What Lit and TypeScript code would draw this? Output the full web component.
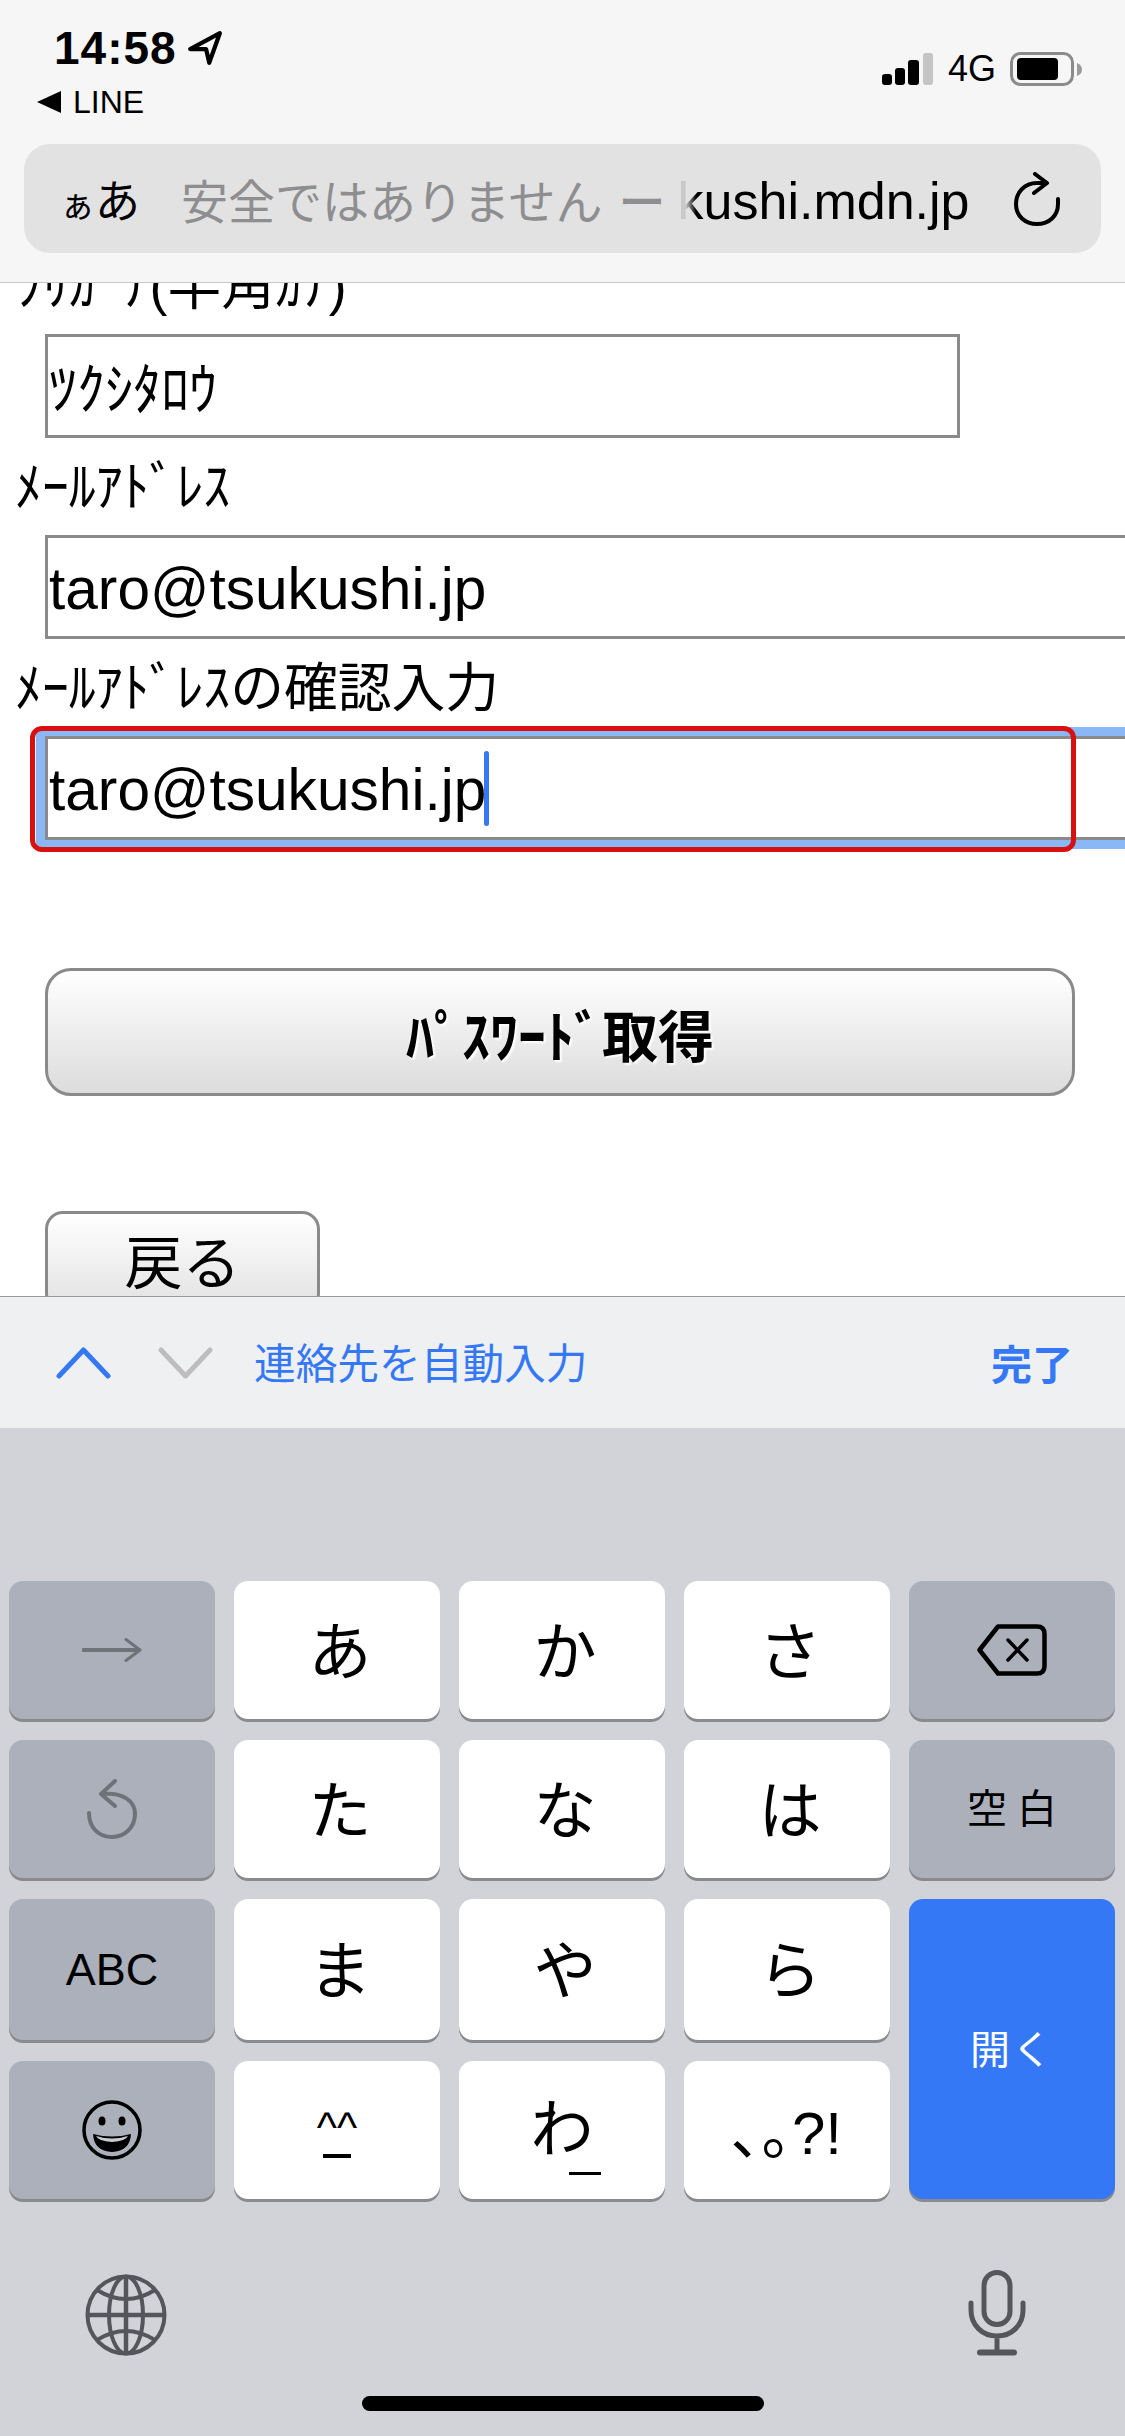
import { LitElement, css, html } from 'lit';
import { customElement } from 'lit/decorators.js';

const arrowIcon = html`<svg width="60" height="24" viewBox="0 0 60 24" fill="none" stroke="#6f7278" stroke-linecap="round" stroke-linejoin="round">
  <path d="M1.5 12H57" stroke-width="4"/><path d="M44 1.5 58 12 44 22.5" stroke-width="3"/></svg>`;

const undoIcon = html`<svg width="50" height="60" viewBox="0 0 50 60" fill="none" stroke="#6f7278" stroke-width="4" stroke-linecap="round" stroke-linejoin="round">
  <path d="M28 2 14 15 28 27"/><path d="M15 15C36 13 48 22 48 35 48 49 37 58 25 58 12 58 2 49 2 34"/></svg>`;

const backspaceIcon = html`<svg width="70" height="52" viewBox="0 0 70 52" fill="none" stroke="#000" stroke-linejoin="round" stroke-linecap="round">
  <path d="M21 2.500H60Q67.500 2.500 67.500 10V42Q67.500 49.500 60 49.500H21L2.500 26Z" stroke-width="4.500"/>
  <path d="M31 16 50 36M50 16 31 36" stroke-width="3.500"/></svg>`;

const smileIcon = html`<svg width="60" height="62" viewBox="0 0 60 62" fill="none">
  <circle cx="30" cy="31" r="28" stroke="#000" stroke-width="3.500"/>
  <ellipse cx="20" cy="22" rx="3.500" ry="4.500" fill="#000"/><ellipse cx="40" cy="22" rx="3.500" ry="4.500" fill="#000"/>
  <path d="M11 35Q30 40 49 35 48 52 30 53 12 52 11 35Z" fill="#000"/>
  <path d="M14 37Q30 42 46 37 44 42 30 43 16 42 14 37Z" fill="#c9cbd0"/></svg>`;

const globeIcon = html`<svg width="82" height="82" viewBox="0 0 82 82" fill="none" stroke="#54565c" stroke-width="4">
  <circle cx="41" cy="41" r="38.500"/><ellipse cx="41" cy="41" rx="17" ry="38.500"/>
  <path d="M41 2.500V79.500M2.500 41H79.500" stroke-width="4.500"/>
  <path d="M12 16Q41 34 70 16M12 66Q41 48 70 66"/></svg>`;

const micIcon = html`<svg width="58" height="86" viewBox="0 0 58 86" fill="none" stroke="#54565c" stroke-width="5" stroke-linecap="round">
  <rect x="16" y="2.500" width="26" height="52" rx="13"/>
  <path d="M3 33V40C3 55 14 66 29 66 44 66 55 55 55 40V33M29 66V82"/><path d="M12 82.500H46" stroke-width="6"/></svg>`;

@customElement('app-root')
export class AppRoot extends LitElement {
  static styles = css`
:host {
  display: flex;
  flex-direction: column;
  width: 1125px;
  height: 2436px;
  overflow: hidden;
  position: relative;
  background: #fff;
  color: #000;
  font-family: "Liberation Sans", "Noto Sans CJK JP", sans-serif;
}
.header {
  flex: none;
  height: 282px;
  background: #f6f6f6;
  border-bottom: 1px solid #c6c6c8;
}
.status {
  display: flex;
  justify-content: space-between;
  height: 144px;
  padding: 25px 43px 0 37px;
  box-sizing: border-box;
}
.time-row {
  display: flex;
  align-items: center;
  gap: 10px;
  margin-left: 17px;
  height: 46px;
  font-size: 46px;
  font-weight: bold;
  letter-spacing: 1px;
}
.line-row {
  display: flex;
  align-items: center;
  gap: 12px;
  margin-top: 15px;
  height: 32px;
  font-size: 32px;
}
.signal {
  display: flex;
  align-items: center;
  align-self: flex-start;
  margin-top: 27px;
  gap: 14px;
  font-size: 36px;
  height: 34px;
}
.url-bar {
  display: flex;
  align-items: center;
  height: 109px;
  margin: 0 24px;
  background: #e2e2e2;
  border-radius: 26px;
  white-space: nowrap;
  position: relative;
}
.aa {
  display: flex;
  align-items: baseline;
  margin-left: 36px;
  width: 121px;
  font-size: 45px;
}
.aa small {
  font-size: 35px;
}
.url {
  font-size: 52px;
  flex: 1;
}
.url .warn {
  color: #8e8e90;
  font-size: 47px;
}
.url .dash {
  margin: 0 12px 0 16px;
  font-weight: 500;
}
.url .fade {
  background: linear-gradient(90deg, #c9c9c9 30%, #000 70%);
  -webkit-background-clip: text;
  background-clip: text;
  color: transparent;
}
.reload {
  margin-right: 41px;
  display: flex;
}
.content {
  flex: 1;
  min-height: 0;
  overflow: hidden;
}
.form {
  margin-top: -46px;
}
.label {
  height: 97px;
  line-height: 99px;
  padding-left: 15px;
  font-size: 53.800px;
  white-space: nowrap;
}
.input {
  display: flex;
  align-items: center;
  box-sizing: border-box;
  height: 104px;
  margin-left: 45px;
  width: 1200px;
  padding: 3px 0 0 1px;
  border: 3px solid #8a8a8a;
  background: #fff;
  font-size: 58.6px;
  white-space: nowrap;
}
.input.short {
  width: 915px;
  padding: 0 0 3px 1px;
  font-size: 56px;
}
.input.focus {
  box-shadow: 0 0 0 9px #8ab8f7;
}
.caret {
  width: 5px;
  height: 75px;
  margin: -3px 0 0 -2px;
  border-radius: 3px;
  background: #3478f6;
}
.btn {
  display: flex;
  align-items: center;
  justify-content: center;
  box-sizing: border-box;
  margin-left: 45px;
  border: 3px solid #8a8a8a;
  background: linear-gradient(#fff, #dcdcdc);
}
.btn.submit {
  width: 1030px;
  height: 128px;
  margin-top: 128px;
  border-radius: 26px;
  font-size: 56px;
  font-weight: bold;
  text-shadow: 2px 2px 2px #fff;
}
.btn.back {
  width: 275px;
  height: 100px;
  margin-top: 115px;
  padding-bottom: 5px;
  border-radius: 18px;
  background: linear-gradient(#fff, #e2e2e2);
  font-size: 58px;
}
.annotation {
  position: absolute;
  left: 30px;
  top: 726px;
  width: 1046px;
  height: 126px;
  box-sizing: border-box;
  border: 5px solid #d8100f;
  border-radius: 12px;
}
.accessory {
  flex: none;
  display: flex;
  align-items: center;
  height: 131px;
  border-top: 1px solid #9a9a9e;
  background: #eff0f2;
  padding: 0 52px 0 56px;
  color: #3478f6;
}
.chevrons {
  display: flex;
  gap: 47px;
}
.autofill {
  margin-left: 41px;
  flex: 1;
  font-size: 41.700px;
  padding-bottom: 4px;
}
.done {
  font-size: 41px;
  font-weight: bold;
  padding-bottom: 2px;
}
.keyboard {
  flex: none;
  box-sizing: border-box;
  height: 1008px;
  background: #d1d3d8;
  padding: 153px 10px 0 9px;
}
.keys {
  display: grid;
  grid-template-columns: repeat(5, 206px);
  grid-template-rows: 138px 138px 141px 138px;
  column-gap: 19px;
  row-gap: 21px;
}
.key {
  display: flex;
  align-items: center;
  justify-content: center;
  position: relative;
  border-radius: 14px;
  background: #fff;
  box-shadow: 0 3px 0 #898a8d;
  font-size: 63px;
}
.key.kana {
  padding: 0 0 8px 6px;
}
.key.fn {
  background: #abb0ba;
}
.key.small {
  font-size: 40px;
  letter-spacing: 10px;
  padding: 0 0 6px 10px;
}
.key.abc {
  font-size: 45px;
}
.key.open {
  grid-column: 5;
  grid-row: 3 / span 2;
  background: #3478f6;
  color: #fff;
  font-size: 40px;
  letter-spacing: 2px;
  padding-bottom: 4px;
}
.key.emoticon {
  font-size: 43px;
  flex-direction: column;
  gap: 2px;
}
.key.punct {
  font-size: 60px;
  padding-bottom: 6px;
}
.wa {
  margin-bottom: 14px;
}
.kaomoji-mouth {
  width: 28px;
  height: 4px;
  background: #000;
}
.wa-mark {
  position: absolute;
  left: 110px;
  top: 111px;
  width: 32px;
  height: 3px;
  background: #000;
}
.bottom-row {
  display: flex;
  justify-content: space-between;
  align-items: flex-end;
  margin-top: 71px;
  padding: 0 89px 0 76px;
}
.home {
  width: 402px;
  height: 15px;
  margin: 40px 0 0 353px;
  border-radius: 8px;
  background: #000;
}
`;

  renderKey(label: string, cls = 'kana') {
    return html`<div class="key ${cls}">${label}</div>`;
  }

  render() {
    return html`
<div class="header">
  <div class="status">
    <div>
      <div class="time-row">14:58
        <svg width="36" height="36" viewBox="0 0 34 34" fill="none" stroke="#000" stroke-width="4" stroke-linejoin="round">
          <path d="M3 18 31 3 21 31 18 18Z"/></svg>
      </div>
      <div class="line-row">
        <svg width="24" height="22" viewBox="0 0 24 22"><path d="M24 0V22L0 11Z"/></svg>LINE
      </div>
    </div>
    <div class="signal">
      <svg width="52" height="32" viewBox="0 0 52 32">
        <rect x="0" y="21" width="10" height="11" rx="3"/>
        <rect x="13" y="15" width="10" height="17" rx="3"/>
        <rect x="26" y="7" width="11" height="25" rx="3"/>
        <rect x="41" y="0" width="10" height="32" rx="3" fill="#c4c4c4"/>
      </svg>
      <span>4G</span>
      <svg width="72" height="34" viewBox="0 0 72 34">
        <rect x="1.500" y="1.500" width="61" height="31" rx="9" fill="none" stroke="#8b8b8b" stroke-width="3"/>
        <rect x="7" y="6" width="41" height="22" rx="4"/>
        <path d="M67 11V24Q72 22 72 17.500 72 13 67 11Z" fill="#9a9a9a"/>
      </svg>
    </div>
  </div>
  <div class="url-bar">
    <div class="aa"><small>ぁ</small>あ</div>
    <div class="url"><span class="warn">安全ではありません<span class="dash">ー</span></span><span class="fade">k</span>ushi.mdn.jp</div>
    <div class="reload">
      <svg width="46" height="54" viewBox="0 0 46 54" fill="none" stroke="#000" stroke-width="4" stroke-linecap="round" stroke-linejoin="round">
        <path d="M32 11H23C10 11 2 21 2 32 2 44 11 52 23 52 35 52 44 44 44 32V27"/>
        <path d="M21 2 33 11 20 21"/>
      </svg>
    </div>
  </div>
</div>

<div class="content">
  <div class="form">
    <div class="label">ﾌﾘｶﾞﾅ(半角ｶﾅ)</div>
    <div class="input short">ﾂｸｼﾀﾛｳ</div>
    <div class="label">ﾒｰﾙｱﾄﾞﾚｽ</div>
    <div class="input">taro@tsukushi.jp</div>
    <div class="label">ﾒｰﾙｱﾄﾞﾚｽの確認入力</div>
    <div class="input focus">taro@tsukushi.jp<span class="caret"></span></div>
    <div class="btn submit">ﾊﾟｽﾜｰﾄﾞ取得</div>
    <div class="btn back">戻る</div>
  </div>
</div>
<div class="annotation"></div>

<div class="accessory">
  <div class="chevrons">
    <svg width="55" height="32" viewBox="0 0 55 32" fill="none" stroke="#3478f6" stroke-width="5" stroke-linecap="round" stroke-linejoin="round"><path d="M3 29 27.500 3 52 29"/></svg>
    <svg width="55" height="32" viewBox="0 0 55 32" fill="none" stroke="#bdbdbf" stroke-width="5" stroke-linecap="round" stroke-linejoin="round"><path d="M3 3 27.500 29 52 3"/></svg>
  </div>
  <div class="autofill">連絡先を自動入力</div>
  <div class="done">完了</div>
</div>

<div class="keyboard">
  <div class="keys">
    <div class="key fn">${arrowIcon}</div>
    ${this.renderKey('あ')}${this.renderKey('か')}${this.renderKey('さ')}
    <div class="key fn">${backspaceIcon}</div>
    <div class="key fn">${undoIcon}</div>
    ${this.renderKey('た')}${this.renderKey('な')}${this.renderKey('は')}
    ${this.renderKey('空白', 'fn small')}
    ${this.renderKey('ABC', 'fn abc')}
    ${this.renderKey('ま')}${this.renderKey('や')}${this.renderKey('ら')}
    ${this.renderKey('開く', 'open')}
    <div class="key fn">${smileIcon}</div>
    <div class="key emoticon">^^<div class="kaomoji-mouth"></div></div>
    <div class="key"><span class="wa">わ</span><div class="wa-mark"></div></div>
    ${this.renderKey('､｡?!', 'punct')}
  </div>
  <div class="bottom-row">
    ${globeIcon}
    ${micIcon}
  </div>
  <div class="home"></div>
</div>
`;
  }
}
